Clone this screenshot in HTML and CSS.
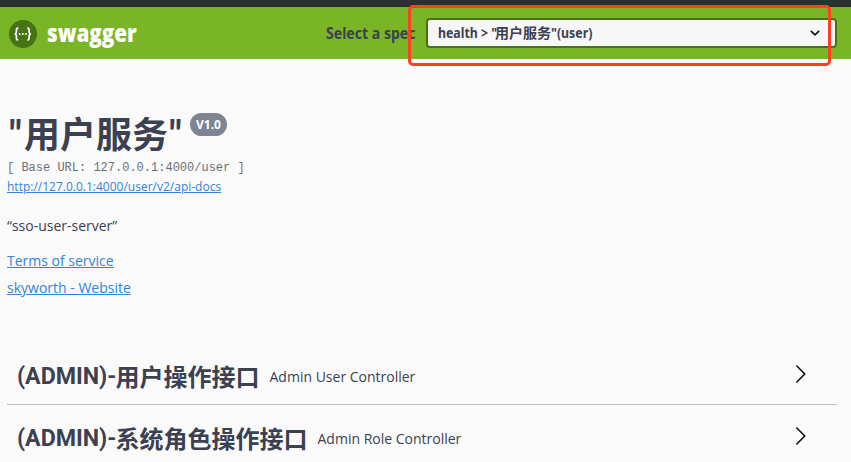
FILE: index.html
```html
<!DOCTYPE html>
<html lang="zh-CN">
<head>
<meta charset="utf-8">
<title>Swagger UI</title>
<link rel="stylesheet" href="styles.css">
</head>
<body>
<div class="chrome"></div>
<header class="topbar">
  <div class="brand">
    <svg class="logo" viewBox="0 0 28 28"><circle cx="14" cy="14" r="14" fill="#477317"/><path d="M9.3 8.2H8.8Q7.4 8.2 7.4 9.8V12Q7.4 13.8 5.6 14Q7.4 14.2 7.4 16V18.4Q7.4 20 8.8 20H9.3M18.2 8.2H18.7Q20.1 8.2 20.1 9.8V12Q20.1 13.8 21.9 14Q20.1 14.2 20.1 16V18.4Q20.1 20 18.7 20H18.2" fill="none" stroke="#fff" stroke-width="1.7"/><g fill="#fff"><circle cx="10.7" cy="14" r=".95"/><circle cx="13.8" cy="14" r=".95"/><circle cx="16.9" cy="14" r=".95"/></g></svg>
    <span class="wordmark">swagger</span>
  </div>
  <label class="spec-label"><span>Select a spec</span></label>
  <div class="select"><span class="value"><span class="latin health">health &gt; "</span><span>用户服务</span><span class="latin user">"(user)</span></span>
    <svg class="caret" viewBox="0 0 10 6"><path d="M.8.8 5 4.8 9.2.8" fill="none" stroke="#111" stroke-width="1.7"/></svg>
  </div>
  <div class="highlight"></div>
</header>
<main>
  <section class="info">
    <h1><span class="quote">"</span><span class="name">用户服务</span><span class="quote">"</span><span class="version">V1.0</span></h1>
    <pre>[ Base URL: 127.0.0.1:4000/user ]</pre>
    <a class="docs" href="#">http://127.0.0.1:4000/user/v2/api-docs</a>
    <p>“sso-user-server”</p>
    <a class="link" href="#">Terms of service</a>
    <a class="link" href="#">skyworth - Website</a>
  </section>
  <section class="tag">
    <h2><span class="prefix">(ADMIN)-</span><span>用户操作接口</span></h2>
    <small>Admin User Controller</small>
    <svg class="arrow" viewBox="0 0 12 20"><path d="M1.4 1.5 9.7 10 1.4 18.5" fill="none" stroke="#111" stroke-width="1.6"/></svg>
  </section>
  <section class="tag">
    <h2><span class="prefix">(ADMIN)-</span><span>系统角色操作接口</span></h2>
    <small>Admin Role Controller</small>
    <svg class="arrow" viewBox="0 0 12 20"><path d="M1.4 1.5 9.7 10 1.4 18.5" fill="none" stroke="#111" stroke-width="1.6"/></svg>
  </section>
</main>
</body>
</html>
```
FILE: styles.css
```css
* { box-sizing: border-box; }
body { margin: 0; height: 462px; overflow: hidden; background: #fafafa; color: #3b4151; font-family: "Open Sans", "Noto Sans CJK SC", sans-serif; }
.chrome { height: 7px; background: #2e2f33; border-bottom: 1px solid #292c25; }
.topbar { position: relative; display: flex; align-items: center; height: 52px; padding: 0 14px 0 9px; background: #7ab527; }
.brand { display: flex; align-items: center; width: 317px; }
.logo { width: 28px; height: 28px; margin-top: 2px; }
.wordmark { margin-left: 10px; color: #fff; font: 800 24px/30px "Open Sans", sans-serif; transform: scaleX(.86); transform-origin: left; }
.spec-label { width: 100px; font: 700 16px/24px "Noto Sans", sans-serif; white-space: nowrap; }
.spec-label span { display: inline-block; transform: scaleX(.88); transform-origin: left; }
.select { display: flex; flex: 1; align-items: center; justify-content: space-between; height: 30px; padding: 0 15px 0 10px; border: 2px solid #477317; border-radius: 4px; background: #f7f7f7; }
.value { display: flex; font: 700 14px/22px "Noto Sans", "Noto Sans CJK SC", sans-serif; white-space: pre; }
.latin { display: block; transform: scaleX(.88); transform-origin: left; }
.health { width: 57px; }
.user { width: 50px; }
.caret { width: 10px; height: 6px; }
.highlight { position: absolute; left: 408px; top: -2px; width: 423px; height: 61px; border: 3px solid #ff4022; border-radius: 5px; }
main { padding: 0 14px 0 7px; }
.info { height: 284px; padding-top: 52px; }
h1 { display: flex; height: 48px; margin: 0; font: 700 36px/43px "Noto Sans CJK SC", sans-serif; white-space: nowrap; }
.quote { flex: none; width: 17px; font-family: Roboto, sans-serif; font-size: 39px; line-height: 48px; text-align: center; }
.name { flex: none; width: 143px; }
.version { height: 23px; margin: 2px 0 0 6px; padding: 0 6px; border-radius: 12px; background: #7d8492; color: #fff; font: 700 12px/23px "Open Sans", sans-serif; }
pre { margin: 0; color: #6b7078; font: 12px/18px "Liberation Mono", monospace; }
.docs { display: block; color: #3284d6; font-size: 12px; line-height: 20px; }
p { margin: 18px 0 11px; font-size: 14px; line-height: 21px; }
.link { display: block; color: #3284d6; font-size: 14px; line-height: 27px; }
.tag { display: flex; align-items: center; height: 62px; padding: 5px 30px 0 10px; border-bottom: 1px solid #bdbebf; }
h2 { display: flex; margin: 0; font: 700 24px/36px "Noto Sans CJK SC", sans-serif; }
.prefix { width: 98.5px; font-family: Roboto, sans-serif; transform: scaleX(.965); transform-origin: left; }
small { flex: 1; padding-left: 10px; font-size: 14px; }
.arrow { width: 12px; height: 20px; margin-bottom: 5px; }
```
